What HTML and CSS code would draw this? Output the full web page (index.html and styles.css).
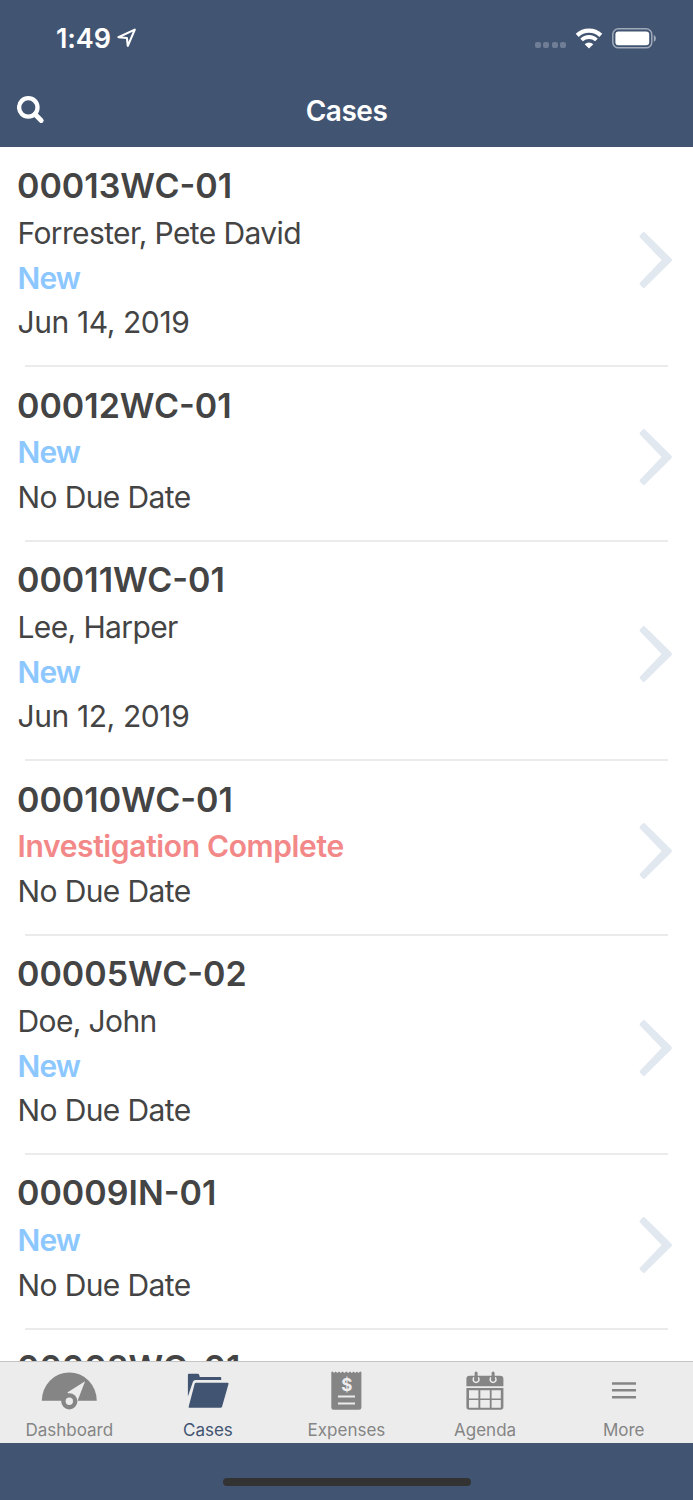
FILE: index.html
```html
<!DOCTYPE html>
<html lang="en">
<head>
    <meta charset="UTF-8">
    <meta name="viewport" content="width=device-width, initial-scale=1.0">
    <title>Cases</title>
    <link rel="stylesheet" href="styles.css">
</head>
<body>
    <div class="app">
        <header class="header">
            <div class="status-bar">
                <div class="status-left">
                    <span class="time">1:49</span>
                    <svg class="location" width="20" height="20" viewBox="0 0 20 20">
                        <path d="M1.4 9.2 L17.8 1.6 L10.8 17.8 L9.9 10 Z" fill="none" stroke="#fff" stroke-width="2.1" stroke-linejoin="round"/>
                    </svg>
                </div>
                <div class="status-right">
                    <div class="signal"><i></i><i></i><i></i><i></i></div>
                    <svg class="wifi" width="28" height="21" viewBox="0 0 28 21">
                        <path d="M2.2 7.4 A17 17 0 0 1 25.8 7.4" fill="none" stroke="#fff" stroke-width="4.3"/>
                        <path d="M6.6 12 A10.6 10.6 0 0 1 21.4 12" fill="none" stroke="#fff" stroke-width="3.8"/>
                        <path d="M14 20.6 L9.7 16.2 A6.2 6.2 0 0 1 18.3 16.2 Z" fill="#fff"/>
                    </svg>
                    <svg class="battery" width="45" height="21" viewBox="0 0 45 21">
                        <rect x="0.8" y="0.8" width="39" height="19" rx="5.6" fill="none" stroke="#a0aab8" stroke-width="1.5"/>
                        <rect x="3.4" y="3.4" width="33.8" height="13.8" rx="3" fill="#fff"/>
                        <path d="M41.8 7 C44.6 8.2 44.6 12.6 41.8 13.8 Z" fill="#a0aab8"/>
                    </svg>
                </div>
            </div>
            <div class="nav-bar">
                <svg class="search" width="28" height="28" viewBox="0 0 28 28">
                    <circle cx="11.3" cy="11.4" r="9.2" fill="none" stroke="#fff" stroke-width="4.3"/>
                    <path d="M18 18.2 L24.2 24.4" stroke="#fff" stroke-width="4.9" stroke-linecap="round"/>
                </svg>
                <h1>Cases</h1>
            </div>
        </header>

        <main class="case-list">
            <div class="case">
                <div class="info">
                    <h2>00013WC-01</h2>
                    <p class="name">Forrester, Pete David</p>
                    <p class="status new">New</p>
                    <p class="date">Jun 14, 2019</p>
                </div>
                <svg class="chevron" viewBox="0 0 34 58"><use href="#chevron"/></svg>
            </div>
            <div class="case">
                <div class="info">
                    <h2>00012WC-01</h2>
                    <p class="status new">New</p>
                    <p class="due">No Due Date</p>
                </div>
                <svg class="chevron" viewBox="0 0 34 58"><use href="#chevron"/></svg>
            </div>
            <div class="case">
                <div class="info">
                    <h2>00011WC-01</h2>
                    <p class="name">Lee, Harper</p>
                    <p class="status new">New</p>
                    <p class="date">Jun 12, 2019</p>
                </div>
                <svg class="chevron" viewBox="0 0 34 58"><use href="#chevron"/></svg>
            </div>
            <div class="case">
                <div class="info">
                    <h2>00010WC-01</h2>
                    <p class="status complete">Investigation Complete</p>
                    <p class="due">No Due Date</p>
                </div>
                <svg class="chevron" viewBox="0 0 34 58"><use href="#chevron"/></svg>
            </div>
            <div class="case">
                <div class="info">
                    <h2>00005WC-02</h2>
                    <p class="name">Doe, John</p>
                    <p class="status new">New</p>
                    <p class="due">No Due Date</p>
                </div>
                <svg class="chevron" viewBox="0 0 34 58"><use href="#chevron"/></svg>
            </div>
            <div class="case">
                <div class="info">
                    <h2>00009IN-01</h2>
                    <p class="status new">New</p>
                    <p class="due">No Due Date</p>
                </div>
                <svg class="chevron" viewBox="0 0 34 58"><use href="#chevron"/></svg>
            </div>
            <div class="case">
                <div class="info">
                    <h2>00008WC-01</h2>
                </div>
            </div>
        </main>

        <nav class="tab-bar">
            <a class="tab">
                <svg width="56" height="40" viewBox="0 0 56 40">
                    <path d="M0.8 29.8 A27.5 28.4 0 0 1 55.8 29.8 Z" fill="#858585"/>
                    <path d="M26.3 21.5 L44.1 10.2 L36.3 30.5 Z" fill="#ececec"/>
                    <circle cx="28.3" cy="30.3" r="5.9" fill="#ececec" stroke="#858585" stroke-width="4.4"/>
                </svg>
                <span>Dashboard</span>
            </a>
            <a class="tab active">
                <svg width="42" height="40" viewBox="0 0 42 40">
                    <path d="M0.9 25.5 V3.8 Q0.9 2.8 1.9 2.8 H10.9 Q11.9 2.8 12.2 4 L12.8 6 H33.5 Q34.2 6 34.2 6.7 V9.1 H8.5 Q6.5 9.1 5.8 11 Z" fill="#415472"/>
                    <path d="M9.1 11.7 H40.5 Q41.9 11.7 41.5 13 L35.1 35.4 Q34.7 36.7 33.4 36.7 H2.5 Q1.3 36.7 1.7 35.4 L7.7 12.8 Q8.1 11.7 9.1 11.7 Z" fill="#415472"/>
                </svg>
                <span>Cases</span>
            </a>
            <a class="tab">
                <svg width="31" height="40" viewBox="0 0 31 40">
                    <path d="M0.3 1 L1.8 0.6 L3 2 L4.6 0.4 L6.4 2 L8 0.4 L9.8 2 L11.6 0.4 L13.4 2 L15.3 0.4 L17.2 2 L19 0.4 L20.8 2 L22.6 0.4 L24.2 2 L26 0.4 L27.6 2 L29 0.6 L30.4 1 V36.5 Q30.4 38.8 28.1 38.8 H2.6 Q0.3 38.8 0.3 36.5 Z" fill="#858585"/>
                    <text x="15.9" y="19.6" text-anchor="middle" class="dollar">$</text>
                    <path d="M7 25.5 H24 M7 32.5 H24" stroke="#ececec" stroke-width="1.9"/>
                </svg>
                <span>Expenses</span>
            </a>
            <a class="tab">
                <svg width="38" height="40" viewBox="0 0 38 40">
                    <path d="M0.4 15.2 V7.9 Q0.4 4.7 3.6 4.7 H34.2 Q37.4 4.7 37.4 7.9 V15.2 Z" fill="#858585"/>
                    <path d="M0.4 16.9 H37.4 V36 Q37.4 38.8 34.6 38.8 H3.2 Q0.4 38.8 0.4 36 Z" fill="#858585"/>
                    <path d="M3 19.3 H12.4 V27.4 H3 Z M14.3 19.3 H23.8 V27.4 H14.3 Z M25.6 19.3 H34.8 V27.4 H25.6 Z M3 29 H12.4 V36.8 H3 Z M14.3 29 H23.8 V36.8 H14.3 Z M25.6 29 H34.8 V36.8 H25.6 Z" fill="#ececec"/>
                    <path d="M8.1 6.4 A2.9 2.9 0 1 0 12.1 6.4 M25.1 6.4 A2.9 2.9 0 1 0 29.1 6.4" fill="none" stroke="#ececec" stroke-width="1.5"/>
                    <path d="M10.1 1.9 V7.4 M27.1 1.9 V7.4" stroke="#858585" stroke-width="3" stroke-linecap="round"/>
                </svg>
                <span>Agenda</span>
            </a>
            <a class="tab">
                <svg width="24" height="40" viewBox="0 0 24 40">
                    <path d="M0 12.4 H24 M0 19.2 H24 M0 26.2 H24" stroke="#858585" stroke-width="2.5"/>
                </svg>
                <span>More</span>
            </a>
        </nav>

        <div class="home-area">
            <div class="home-indicator"></div>
        </div>
    </div>

    <svg width="0" height="0" class="defs">
        <symbol id="chevron" viewBox="0 0 34 58">
            <path d="M5.6 1.3 L32.3 27.6 Q33.7 29 32.3 30.4 L5.6 56.7 Q4.6 57.4 3.6 56.6 L0.9 53.6 Q0.2 52.6 1 51.7 L22.6 29 L1 6.5 Q0.2 5.6 0.9 4.6 L3.6 1.5 Q4.6 0.5 5.6 1.3 Z" fill="#e1e8f0"/>
        </symbol>
    </svg>
</body>
</html>
```
FILE: styles.css
```css
* {
    box-sizing: border-box;
}

body {
    margin: 0;
    font-family: Inter, "Liberation Sans", sans-serif;
    background: #fff;
    color: #444;
}

h1, h2, p {
    margin: 0;
}

.app {
    display: flex;
    flex-direction: column;
    height: 1500px;
    overflow: hidden;
}

.header {
    flex: none;
    height: 147px;
    background: #415472;
    color: #fff;
}

.status-bar {
    display: flex;
    justify-content: space-between;
    align-items: center;
    height: 76px;
    padding: 0 36px 0 56px;
}

.status-left, .status-right {
    display: flex;
    align-items: center;
}

.time {
    font-size: 27px;
    font-weight: 600;
    letter-spacing: -0.1px;
}

.location {
    margin-left: 6px;
}

.signal {
    display: flex;
    gap: 2.6px;
    margin: 14px 9px 0 0;
}

.signal i {
    width: 5.8px;
    height: 6px;
    border-radius: 2px;
    background: #6f7e95;
}

.wifi {
    margin-right: 9px;
}

.nav-bar {
    display: grid;
    grid-template-columns: 60px 1fr 60px;
    align-items: center;
    height: 69px;
}

.search {
    margin: -1px 0 0 17px;
}

.nav-bar h1 {
    font-size: 28px;
    font-weight: 600;
    letter-spacing: -0.5px;
    text-align: center;
}

.case-list {
    flex: 1;
    min-height: 0;
    padding-top: 0.9px;
    overflow: hidden;
}

.case {
    display: flex;
    justify-content: space-between;
    align-items: center;
    margin: 0 25px;
    padding: 13.5px 0 20.1px;
    border-bottom: 2px solid #ebebeb;
}

.info {
    margin-left: -8px;
    white-space: nowrap;
}

.info h2 {
    margin-bottom: 0.5px;
    font-size: 34px;
    font-weight: 600;
    line-height: 49.2px;
}

.info p {
    padding-left: 0.5px;
    font-size: 30px;
    line-height: 44.65px;
    letter-spacing: -0.62px;
}

.info .status {
    font-weight: 600;
    letter-spacing: -0.36px;
}

.info .new {
    letter-spacing: -0.9px;
}

.info .date {
    letter-spacing: -0.4px;
}

.new {
    color: #8cc8ff;
}

.complete {
    color: #f38888;
}

.chevron {
    width: 34px;
    height: 58px;
    margin: 14px -5px 0 0;
}

.tab-bar {
    display: flex;
    flex: none;
    height: 82px;
    background: #ececec;
    border-top: 1px solid #c4c4c4;
}

.tab {
    display: flex;
    flex: 1;
    flex-direction: column;
    align-items: center;
    padding-top: 9.5px;
    color: #858585;
    font-size: 17px;
}

.tab span {
    margin-top: 9px;
    line-height: 21px;
}

.tab.active {
    color: #415472;
}

.dollar {
    font-size: 17px;
    font-weight: 700;
    fill: #ececec;
}

.home-area {
    display: flex;
    flex: none;
    justify-content: center;
    height: 57.3px;
    padding-top: 35px;
    background: #415472;
}

.home-indicator {
    width: 248px;
    height: 8px;
    border-radius: 4px;
    background: #333;
}

.defs {
    position: absolute;
}
```
